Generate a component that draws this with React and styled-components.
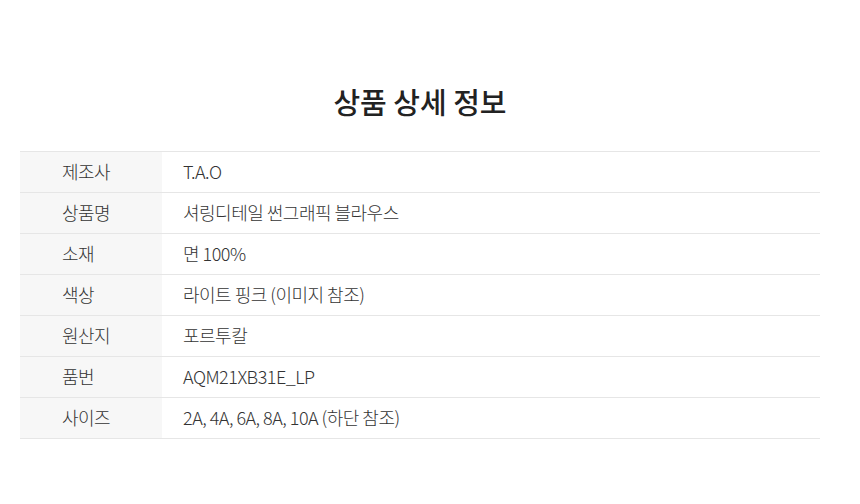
import React from 'react';
import styled, { createGlobalStyle } from 'styled-components';

const GlobalStyle = createGlobalStyle`
  body {
    margin: 0;
    background: #fff;
    font-family: "Noto Sans CJK KR", "Noto Sans", sans-serif;
    color: #333;
  }
`;

const Wrapper = styled.div`
  width: 800px;
  padding: 80px 0 0 20px;
`;

const Title = styled.h2`
  margin: 0 0 29px;
  text-align: center;
  font-size: 29px;
  font-weight: 500;
  line-height: 42px;
  color: #222;
`;

const Table = styled.table`
  width: 100%;
  border-collapse: collapse;
  border-top: 1px solid #e6e6e6;
`;

const Row = styled.tr`
  height: 41px;
  border-bottom: 1px solid #e6e6e6;
`;

const Label = styled.th`
  width: 100px;
  padding: 0 0 2px 42px;
  background: #f7f7f7;
  font-size: 18px;
  font-weight: 300;
  letter-spacing: -0.5px;
  color: #333;
  text-align: left;
`;

const Value = styled.td`
  padding: 0 21px 2px;
  font-size: 18px;
  font-weight: 300;
  letter-spacing: -0.5px;
  color: #333;
`;

const rows = [
  ['제조사', 'T.A.O'],
  ['상품명', '셔링디테일 썬그래픽 블라우스'],
  ['소재', '면 100%'],
  ['색상', '라이트 핑크 (이미지 참조)'],
  ['원산지', '포르투칼'],
  ['품번', 'AQM21XB31E_LP'],
  ['사이즈', '2A, 4A, 6A, 8A, 10A (하단 참조)'],
];

const App = () => {
  return (
    <Wrapper>
      <GlobalStyle />
      <Title>상품 상세 정보</Title>
      <Table>
        <tbody>
          {rows.map(([k, v]) => (
            <Row key={k}>
              <Label>{k}</Label>
              <Value>{v}</Value>
            </Row>
          ))}
        </tbody>
      </Table>
    </Wrapper>
  );
};

export default App;
